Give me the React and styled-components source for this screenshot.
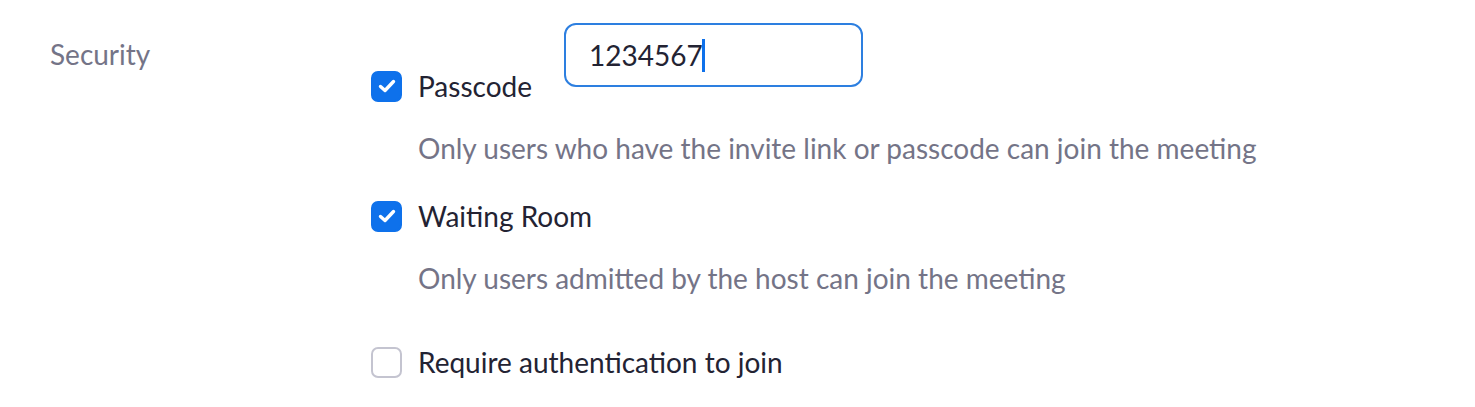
import React from 'react'
import styled, { createGlobalStyle } from 'styled-components';

const GlobalStyle = createGlobalStyle`
body{
    margin:0;
    background:#FFF;
    font-family: Lato, "Open Sans", sans-serif;
}
`

const Page = styled.div`
display:grid;
grid-template-columns: 321px 1fr;
padding: 23px 0 0 50px;
height:407px;
box-sizing:border-box;
overflow:hidden;
`

const SectionLabel = styled.div`
color: #747487;
font-size: 28px;
line-height: 32px;
margin-top: 15px;
`

const Options = styled.div`
display:flex;
flex-direction:column;
`

const Option = styled.div`
display:flex;
flex-direction:column;
gap: 30px;
margin-top: ${props => props.$top || 0}px;
`

const TopRow = styled.div`
display:flex;
align-items:flex-start;
`

const CheckRow = styled.label`
display:flex;
align-items:center;
gap: 16px;
height:32px;
color: #232333;
font-size: 28px;
line-height: 32px;
margin-top: ${props => props.$top || 0}px;
cursor:pointer;
`

const Box = styled.span`
width: 31px;
height: 31px;
box-sizing:border-box;
border-radius: 7px;
display:flex;
align-items:center;
justify-content:center;
flex-shrink:0;
background: ${props => props.$checked ? '#0E71EB' : '#FFF'};
border: 2px solid ${props => props.$checked ? '#0E71EB' : '#C4C4D0'};
`

const Description = styled.p`
margin:0;
color: #747487;
font-size: 28px;
line-height: 32px;
padding-left: 47px;
`

const PasscodeField = styled.div`
margin-left: 32px;
width: 299px;
height: 64px;
box-sizing:border-box;
border: 2px solid #2D7FE0;
border-radius: 12px;
display:flex;
align-items:center;
padding-left: 23px;
color:#232333;
font-size: 28px;
`

const Caret = styled.span`
display:inline-block;
width:3px;
height:33px;
background:#0E71EB;
margin-left:-1px;
`

function Checkbox({ checked, label, top }) {
  return (
    <CheckRow $top={top}>
      <Box $checked={checked}>
        {checked && (
          <svg width="20" height="20" viewBox="0 0 20 20" fill="none">
            <path d="M3.5 10.5 L8 14.5 L16.5 5.5" stroke="#FFF" strokeWidth="3.4" strokeLinecap="round" strokeLinejoin="round" />
          </svg>
        )}
      </Box>
      {label}
    </CheckRow>
  )
}

function App() {
  return (
    <>
      <GlobalStyle />
      <Page>
        <SectionLabel>Security</SectionLabel>
        <Options>
          <Option>
            <TopRow>
              <Checkbox checked label="Passcode" top={47} />
              <PasscodeField role="textbox">1234567<Caret /></PasscodeField>
            </TopRow>
            <Description>Only users who have the invite link or passcode can join the meeting</Description>
          </Option>
          <Option $top={36}>
            <Checkbox checked label="Waiting Room" />
            <Description>Only users admitted by the host can join the meeting</Description>
          </Option>
          <Option $top={52}>
            <Checkbox label="Require authentication to join" />
          </Option>
        </Options>
      </Page>
    </>
  )
}

export default App
